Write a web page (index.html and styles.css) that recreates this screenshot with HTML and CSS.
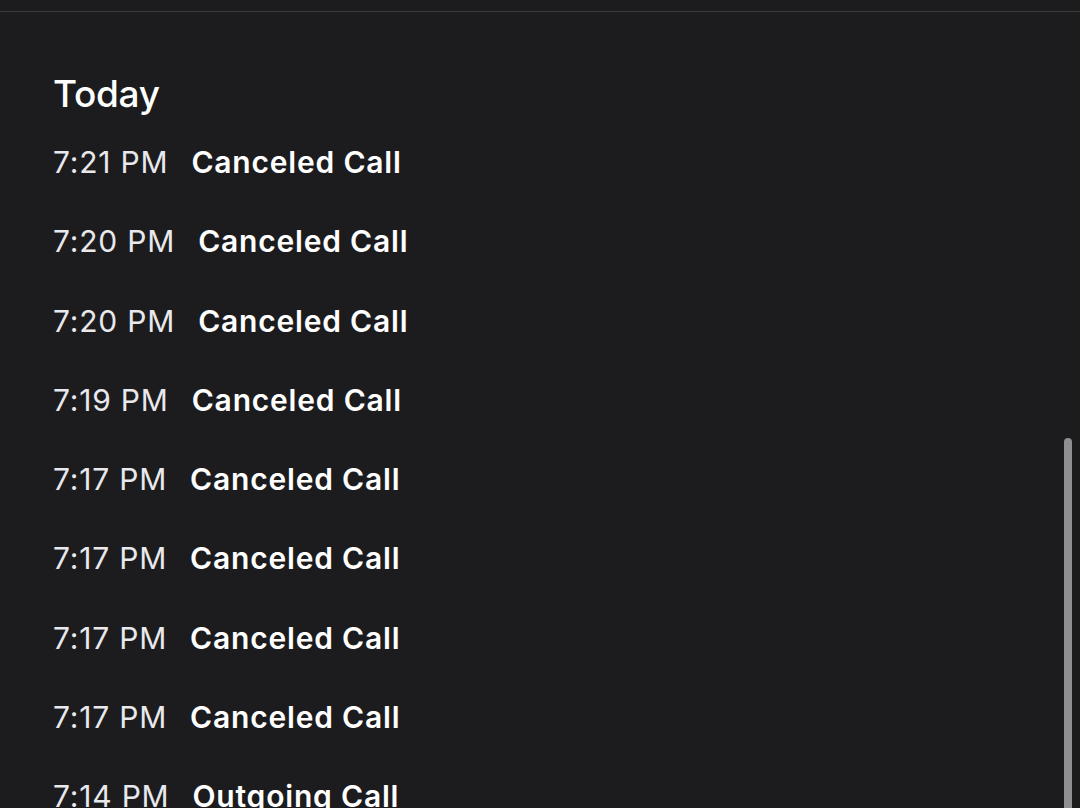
FILE: index.html
```html
<!DOCTYPE html>
<html lang="en">
<head>
  <meta charset="UTF-8" />
  <meta name="viewport" content="width=device-width, initial-scale=1.0" />
  <title>Recents</title>
  <link rel="stylesheet" href="styles.css">
</head>
<body>
  <div class="topbar"></div>
  <div class="list">
    <h2 class="day">Today</h2>
    <div class="row"><span class="time">7:21 PM</span><span class="kind">Canceled Call</span></div>
    <div class="row"><span class="time">7:20 PM</span><span class="kind">Canceled Call</span></div>
    <div class="row"><span class="time">7:20 PM</span><span class="kind">Canceled Call</span></div>
    <div class="row"><span class="time">7:19 PM</span><span class="kind">Canceled Call</span></div>
    <div class="row"><span class="time">7:17 PM</span><span class="kind">Canceled Call</span></div>
    <div class="row"><span class="time">7:17 PM</span><span class="kind">Canceled Call</span></div>
    <div class="row"><span class="time">7:17 PM</span><span class="kind">Canceled Call</span></div>
    <div class="row"><span class="time">7:17 PM</span><span class="kind">Canceled Call</span></div>
    <div class="row"><span class="time">7:14 PM</span><span class="kind">Outgoing Call</span></div>
  </div>
  <div class="scrollbar"></div>
</body>
</html>
```

FILE: styles.css
```css
html, body {
  height: 100%;
}
body {
  margin: 0;
  background: #1c1c1e;
  color: #fff;
  font-family: Inter, "Noto Sans", sans-serif;
  overflow: hidden;
}
.topbar {
  height: 11px;
  border-bottom: 1px solid #3a3a3c;
}
.list {
  padding: 52px 0 0 53px;
}
.day {
  margin: 0 0 20px;
  font-size: 37px;
  font-weight: 500;
  line-height: 60px;
  letter-spacing: -0.3px;
}
.row {
  display: flex;
  gap: 23px;
  height: 79.3px;
  font-size: 30px;
  line-height: 36px;
  letter-spacing: 0.8px;
}
.time {
  color: #e8e8ed;
}
.kind {
  font-weight: 600;
}
.scrollbar {
  position: absolute;
  right: 8px;
  top: 438px;
  bottom: 0;
  width: 8px;
  background: #8e8e93;
  border-radius: 4px 4px 0 0;
}
```
